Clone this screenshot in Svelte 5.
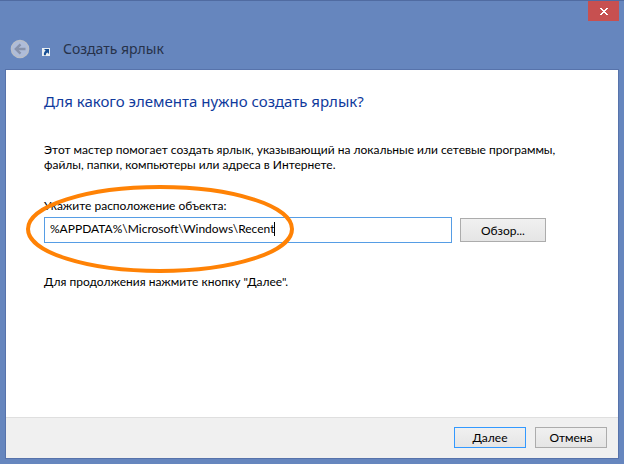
<script lang="ts">
	let { onclose = () => {} }: { onclose?: () => void } = $props();

	let target = $state('%APPDATA%\\Microsoft\\Windows\\Recent');
	let canContinue = $derived(target.trim().length > 0);
</script>

<div class="window">
	<div class="titlebar">
		<button class="close" type="button" aria-label="Закрыть" onclick={onclose}>
			<svg width="8" height="7" viewBox="0 0 8 7" shape-rendering="crispEdges">
				<path
					d="M0 0h2v1h1v1h2V1h1V0h2v1H7v1H6v1H5v1h1v1h1v1h1v1H6V6H5V5H3v1H2v1H0V6h1V5h1V4h1V3H2V2H1V1H0z"
					fill="#fff"
				/>
			</svg>
		</button>
	</div>

	<header class="caption">
		<button class="back" type="button" aria-label="Назад" disabled>
			<svg width="20" height="20" viewBox="0 0 20 20">
				<circle cx="10" cy="10" r="8.5" fill="#aebcd9" stroke="#b9bec8" stroke-width="1.6" />
				<path d="M15.5 10H6M10.5 5.3L5.8 10l4.7 4.7" fill="none" stroke="#8792ab" stroke-width="2.4" />
			</svg>
		</button>
		<svg class="shortcut" width="8" height="8" viewBox="0 0 8 8">
			<rect width="8" height="8" fill="#e9eef2" />
			<path d="M2 1h5v5L5.5 4.6C4.3 5.2 3.8 6 3.9 7.2H2C1.6 5.4 2.1 3.8 3.7 2.8z" fill="#174f95" />
		</svg>
		<span class="caption-text">Создать ярлык</span>
	</header>

	<main class="page">
		<section class="content">
			<h1>Для какого элемента нужно создать ярлык?</h1>
			<p class="intro">
				Этот мастер помогает создать ярлык, указывающий на локальные или сетевые программы, файлы,
				папки, компьютеры или адреса в Интернете.
			</p>

			<div class="location">
				<label for="target">Укажите расположение объекта:</label>
				<div class="row">
					<div class="field">
						<input id="target" type="text" spellcheck="false" bind:value={target} />
						<span class="caret"></span>
					</div>
					<button class="browse" type="button">Обзор...</button>
				</div>
				<!-- выделение поля -->
				<svg class="mark" width="270" height="90" viewBox="0 0 270 90">
					<ellipse cx="135" cy="45" rx="132" ry="42" fill="none" stroke="#ff8205" stroke-width="4" />
				</svg>
			</div>

			<p class="hint">Для продолжения нажмите кнопку "Далее".</p>
		</section>

		<footer>
			<button class="next" type="button" disabled={!canContinue}>Далее</button>
			<button type="button" onclick={onclose}>Отмена</button>
		</footer>
	</main>
</div>

<style>
	.window {
		box-sizing: border-box;
		min-height: 100vh;
		display: flex;
		flex-direction: column;
		padding: 0 5px 5px;
		border-top: 1px solid #506ba1;
		background: #6686be;
		color: #000;
		font: 12px/15px Lato, 'Noto Sans', sans-serif;
	}

	button {
		box-sizing: border-box;
		width: 72px;
		height: 21px;
		padding: 0;
		border: 1px solid #acacac;
		background: linear-gradient(#f0f0f0, #e5e5e5);
		color: #000;
		font: inherit;
	}

	.titlebar {
		display: flex;
		justify-content: flex-end;
	}

	.close {
		display: flex;
		align-items: center;
		justify-content: center;
		width: 31px;
		height: 20px;
		border: none;
		background: #c75050;
	}

	.caption {
		display: flex;
		align-items: center;
		height: 20px;
		padding: 18px 5px 10px;
	}

	.back {
		width: 20px;
		height: 20px;
		border: none;
		background: none;
	}

	.back svg {
		display: block;
	}

	.shortcut {
		margin: 5px 13px 0 12px;
	}

	.caption-text {
		color: #27324a;
		font-family: 'Noto Sans', sans-serif;
		font-size: 14px;
		line-height: 20px;
	}

	.page {
		flex: 1;
		display: flex;
		flex-direction: column;
		border: 1px solid #5773ab;
		background: #fff;
	}

	.content {
		flex: 1;
		padding: 20px 38px;
	}

	h1 {
		margin: 0;
		color: #0f3a9c;
		font-family: 'Noto Sans', sans-serif;
		font-size: 15px;
		font-weight: 400;
		line-height: 22px;
	}

	p {
		margin: 0;
	}

	.intro {
		max-width: 530px;
		margin-top: 30px;
	}

	.location {
		position: relative;
		margin-top: 26px;
	}

	label {
		display: block;
	}

	.row {
		display: flex;
		align-items: center;
		gap: 8px;
		margin-top: 4px;
	}

	.field {
		position: relative;
		flex: 1;
		max-width: 408px;
	}

	input {
		display: block;
		box-sizing: border-box;
		width: 100%;
		height: 26px;
		padding: 0 5px 4px;
		border: 1px solid #569de5;
		background: #fff;
		color: #000;
		font: inherit;
		outline: none;
	}

	.caret {
		position: absolute;
		top: 5px;
		left: 230px;
		width: 1px;
		height: 14px;
		background: #000;
	}

	.browse {
		width: 86px;
		height: 24px;
	}

	.mark {
		position: absolute;
		top: -14px;
		left: -19px;
		pointer-events: none;
	}

	.hint {
		margin-top: 31px;
	}

	footer {
		display: flex;
		justify-content: flex-end;
		gap: 9px;
		padding: 9px 11px 10px;
		border-top: 1px solid #dfdfdf;
		background: #f0f0f0;
	}

	.next {
		border-color: #3399ff;
	}
</style>
